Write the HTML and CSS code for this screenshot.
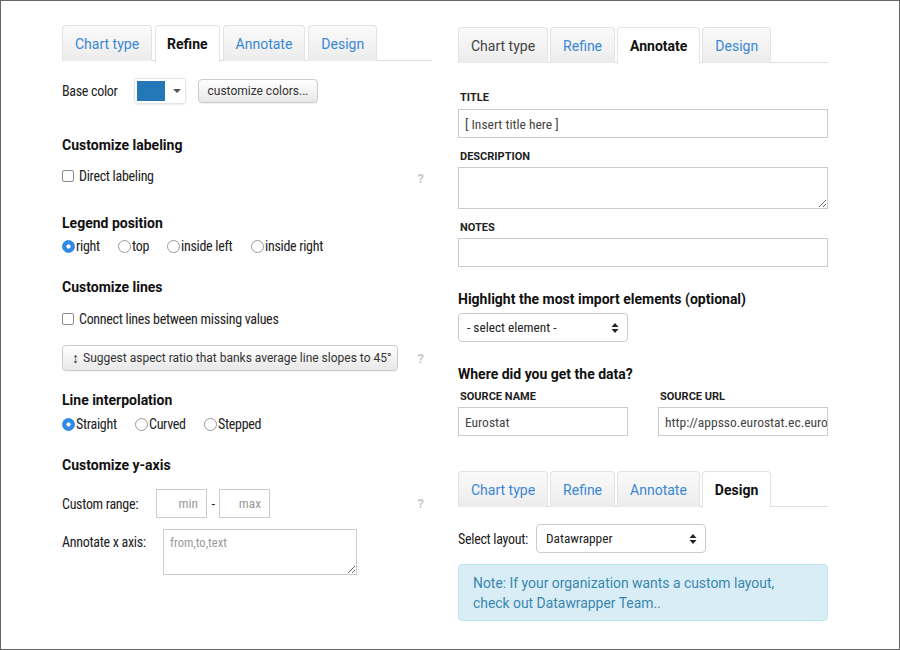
FILE: index.html
```html
<!DOCTYPE html>
<html>
<head>
<meta charset="utf-8">
<link rel="stylesheet" href="styles.css">
</head>
<body>
<div class="frame">
  <div class="col col-left">
    <div class="tabs tabs-l">
      <div class="tab">Chart type</div>
      <div class="tab active">Refine</div>
      <div class="tab">Annotate</div>
      <div class="tab">Design</div>
    </div>

    <div class="row base-row">
      <span class="lbl">Base color</span>
      <div class="colorpick">
        <span class="swatch"></span>
        <svg class="caret" width="10" height="6" viewBox="0 0 10 6"><path d="M1 1h8L5 5z" fill="#555"/></svg>
      </div>
      <div class="btn btn-colors">customize colors...</div>
    </div>

    <div class="heading h-first">Customize labeling</div>
    <div class="row check-row gap-11">
      <label class="chk"><input type="checkbox" class="cb"><span class="lbl">Direct labeling</span></label>
      <span class="help">?</span>
    </div>

    <div class="heading gap-27">Legend position</div>
    <div class="row radio-row gap-3">
      <label class="rad w-right"><input type="radio" class="rb" name="lp" checked><span class="lbl">right</span></label>
      <label class="rad w-top"><input type="radio" class="rb" name="lp"><span class="lbl">top</span></label>
      <label class="rad w-il"><input type="radio" class="rb" name="lp"><span class="lbl">inside left</span></label>
      <label class="rad"><input type="radio" class="rb" name="lp"><span class="lbl">inside right</span></label>
    </div>

    <div class="heading gap-21">Customize lines</div>
    <div class="row check-row gap-12">
      <label class="chk"><input type="checkbox" class="cb"><span class="lbl">Connect lines between missing values</span></label>
    </div>
    <div class="row aspect-row">
      <div class="btn btn-aspect"><span class="arrow">&#8597;</span> Suggest aspect ratio that banks average line slopes to 45°</div>
      <span class="help">?</span>
    </div>

    <div class="heading gap-19">Line interpolation</div>
    <div class="row radio-row gap-4">
      <label class="rad w-straight"><input type="radio" class="rb" name="li" checked><span class="lbl">Straight</span></label>
      <label class="rad w-curved"><input type="radio" class="rb" name="li"><span class="lbl">Curved</span></label>
      <label class="rad"><input type="radio" class="rb" name="li"><span class="lbl">Stepped</span></label>
    </div>

    <div class="heading gap-21">Customize y-axis</div>
    <div class="row range-row">
      <span class="lbl range-lbl">Custom range:</span>
      <input class="small-in" placeholder="min">
      <span class="lbl dash">-</span>
      <input class="small-in" placeholder="max">
      <span class="help help-range">?</span>
    </div>
    <div class="row annot-row">
      <span class="lbl annot-lbl">Annotate x axis:</span>
      <textarea class="annot-ta" placeholder="from,to,text"></textarea>
    </div>
  </div>

  <div class="col col-right">
    <div class="tabs tabs-r">
      <div class="tab dark">Chart type</div>
      <div class="tab">Refine</div>
      <div class="tab active">Annotate</div>
      <div class="tab">Design</div>
    </div>

    <div class="caps first-caps">Title</div>
    <input class="in full" value="[ Insert title here ]">
    <div class="caps">Description</div>
    <textarea class="ta full desc"></textarea>
    <div class="caps">Notes</div>
    <input class="in full notes">

    <div class="heading gap-22">Highlight the most import elements (optional)</div>
    <div class="select sel-el">
      <span>- select element -</span>
      <svg width="8" height="12" viewBox="0 0 8 12"><path d="M4 1L7.5 5h-7z M4 11L0.5 7h7z" fill="#222"/></svg>
    </div>

    <div class="heading gap-22">Where did you get the data?</div>
    <div class="src-grid">
      <div class="src">
        <div class="caps src-caps">Source name</div>
        <input class="in" value="Eurostat">
      </div>
      <div class="src">
        <div class="caps src-caps">Source URL</div>
        <input class="in url" value="http://appsso.eurostat.ec.europa.eu/nui/show.do">
      </div>
    </div>

    <div class="tabs tabs-r2">
      <div class="tab">Chart type</div>
      <div class="tab">Refine</div>
      <div class="tab">Annotate</div>
      <div class="tab active">Design</div>
    </div>

    <div class="row layout-row">
      <span class="lbl">Select layout:</span>
      <div class="select sel-layout">
        <span>Datawrapper</span>
        <svg width="8" height="12" viewBox="0 0 8 12"><path d="M4 1L7.5 5h-7z M4 11L0.5 7h7z" fill="#222"/></svg>
      </div>
    </div>
    <div class="alert">Note: If your organization wants a custom layout,<br>check out Datawrapper Team..</div>
  </div>
</div>
</body>
</html>
```

FILE: styles.css
```css
* { box-sizing: border-box; }
html, body { margin: 0; padding: 0; background: #fff; }
body { font-family: Roboto, "Noto Sans", sans-serif; color: #222; font-size: 14px; }

.frame {
  width: 900px;
  height: 650px;
  border: 1px solid #666;
  display: flex;
  padding-left: 61px;
  gap: 26px;
  overflow: hidden;
}

.col { width: 370px; display: flex; flex-direction: column; }
.col-left { padding-top: 24px; }
.col-right { padding-top: 26px; }

/* tabs */
.tabs {
  display: flex;
  border-bottom: 1px solid #ddd;
  height: 36px;
  gap: 2px;
}
.tabs-l { gap: 3px; }
.tab {
  height: 36px;
  padding: 0 12px;
  line-height: 36px;
  font-size: 14px;
  color: #3a87d3;
  border: 1px solid #e3e3e3;
  border-bottom: none;
  border-radius: 4px 4px 0 0;
  background: linear-gradient(#fafafa, #ececec);
  white-space: nowrap;
}
.tab.active {
  background: #fff;
  color: #111;
  font-weight: 700;
  height: 37px;
  border-color: #e3e3e3;
}
.tabs-l .tab.active { padding: 0 11px; }
.tab.dark { color: #444; }

.lbl {
  font-family: "Roboto Condensed", "Liberation Sans Narrow", "DejaVu Sans Condensed", Roboto, sans-serif;
  font-size: 14px;
  letter-spacing: -0.3px;
  color: #222;
}

.row { display: flex; align-items: center; }

.base-row { margin-top: 17px; height: 26px; }
.base-row .lbl { width: 72px; }
.colorpick {
  width: 52px;
  height: 26px;
  border: 1px solid #e6e6e6;
  border-radius: 3px;
  box-shadow: 0 1px 2px rgba(0,0,0,0.08);
  display: flex;
  align-items: center;
  padding: 2px;
  gap: 7px;
}
.swatch { width: 28px; height: 20px; background: #2478b8; display: block; }
.btn {
  border: 1px solid #ccc;
  border-radius: 4px;
  background: linear-gradient(#fff, #e8e8e8);
  box-shadow: 0 1px 1px rgba(0,0,0,0.06);
  font-size: 12px;
  color: #333;
  display: flex;
  align-items: center;
  white-space: nowrap;
}
.btn-colors { margin-left: 12px; height: 24px; width: 120px; justify-content: center; }

.heading {
  font-weight: 700;
  font-size: 14px;
  line-height: 20px;
  color: #111;
}
.h-first { margin-top: 31px; }
.gap-27 { margin-top: 27px; }
.gap-22 { margin-top: 22px; }
.gap-21 { margin-top: 21px; }
.gap-19 { margin-top: 19px; }
.gap-12 { margin-top: 12px; }
.gap-11 { margin-top: 11px; }
.gap-4 { margin-top: 4px; }
.gap-3 { margin-top: 3px; }

.check-row { height: 20px; justify-content: space-between; }
.chk, .rad { display: flex; align-items: center; }

.cb {
  appearance: none;
  -webkit-appearance: none;
  width: 12px;
  height: 12px;
  margin: 0 5px 0 0;
  border: 1px solid #8a8a8a;
  border-radius: 2px;
  background: #fff;
}
.rb {
  appearance: none;
  -webkit-appearance: none;
  width: 13px;
  height: 13px;
  margin: 0 1px 0 0;
  border: 1px solid #9a9a9a;
  border-radius: 50%;
  background: #fff;
}
.rb:checked {
  border-color: #2f8ae5;
  background: radial-gradient(circle, #fff 0 1.8px, #2f8ae5 2.4px);
}

.help {
  color: #c8c8c8;
  font-size: 13px;
  font-weight: 700;
  margin-right: 8px;
  padding-top: 5px;
}

.radio-row { height: 20px; }
.w-right { width: 56px; }
.w-top { width: 49px; }
.w-il { width: 84px; }
.w-straight { width: 73px; }
.w-curved { width: 69px; }

.aspect-row { margin-top: 16px; justify-content: space-between; }
.btn-aspect { width: 336px; height: 26px; padding-left: 9px; gap: 0; }
.btn-aspect .arrow { font-size: 14px; margin-right: 4px; color: #333; }
.aspect-row .help { padding-top: 0; }

.range-row { margin-top: 14px; height: 29px; }
.range-lbl { width: 94px; }
.small-in {
  width: 51px;
  height: 29px;
  border: 1px solid #ccc;
  font-family: "Roboto Condensed", Roboto, sans-serif;
  font-size: 13.3px;
  text-align: right;
  padding: 0 8px;
  outline: none;
}
.small-in::placeholder { color: #999; }
.dash { width: 12px; text-align: center; }
.help-range { margin-left: auto; padding-top: 0; }

.annot-row { margin-top: 11px; align-items: flex-start; }
.annot-lbl { width: 101px; padding-top: 5px; }
.annot-ta {
  width: 194px;
  height: 46px;
  border: 1px solid #ccc;
  font-family: "Roboto Condensed", Roboto, sans-serif;
  font-size: 12.5px;
  padding: 5px 6px;
  resize: vertical;
  outline: none;
}
.annot-ta::placeholder { color: #999; }

/* right column */
.caps {
  font-size: 11px;
  font-weight: 700;
  text-transform: uppercase;
  line-height: 14px;
  margin-top: 12px;
  margin-left: 2px;
  color: #222;
}
.first-caps { margin-top: 28px; }
.in {
  height: 29px;
  border: 1px solid #ccc;
  border-radius: 0;
  font-family: "Roboto Condensed", Roboto, sans-serif;
  font-size: 13.5px;
  color: #444;
  padding: 0 6px;
  outline: none;
  margin-top: 4px;
  width: 100%;
}
.in.url { padding-right: 0; }
.full { width: 370px; }
.ta {
  border: 1px solid #ccc;
  height: 42px;
  margin-top: 3px;
  resize: vertical;
  outline: none;
}
.notes { margin-top: 3px; }

.select {
  height: 29px;
  border: 1px solid #ccc;
  border-radius: 4px;
  background: #fff;
  display: flex;
  align-items: center;
  justify-content: space-between;
  padding: 0 8px 0 8px;
  font-family: "Roboto Condensed", Roboto, sans-serif;
  font-size: 13.3px;
  color: #222;
}
.sel-el { width: 170px; margin-top: 4px; }

.src-grid { display: flex; gap: 30px; margin-top: 6px; }
.src { width: 170px; display: flex; flex-direction: column; }
.src-caps { margin-top: 0; }
.src .in { margin-top: 3px; }

.tabs-r2 { margin-top: 35px; }

.layout-row { margin-top: 17px; gap: 8px; }
.sel-layout { width: 170px; padding-left: 9px; }

.alert {
  margin-top: 11px;
  height: 57px;
  background: #d9edf7;
  border: 1px solid #bce8f1;
  border-radius: 4px;
  color: #3a87ad;
  font-size: 13.9px;
  line-height: 20px;
  padding: 8px 14px;
}
```
